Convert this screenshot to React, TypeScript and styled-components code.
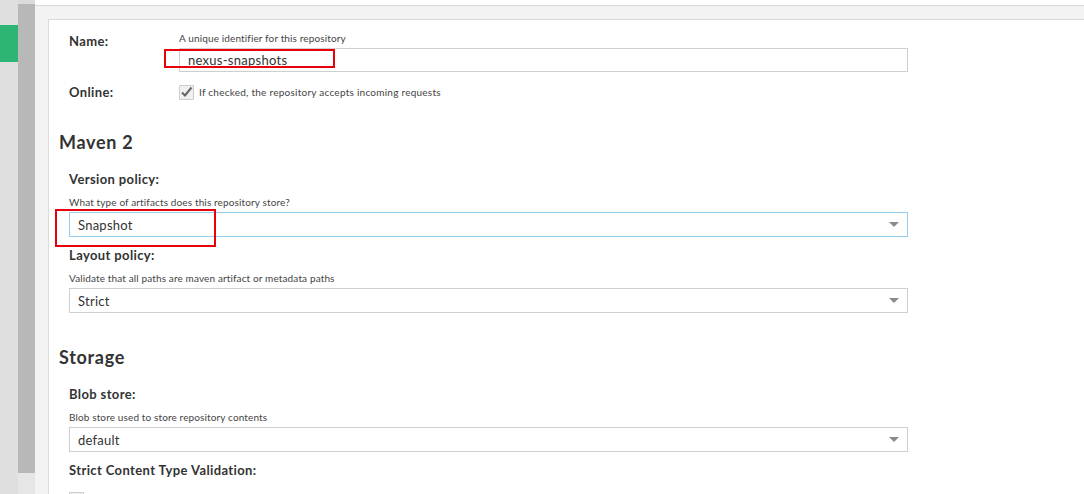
import styled, { createGlobalStyle } from 'styled-components';

const GlobalStyle = createGlobalStyle`
  html, body {
    margin: 0;
    padding: 0;
    background: #ffffff;
    font-family: Lato, 'Noto Sans', sans-serif;
    color: #333333;
  }
  * {
    box-sizing: border-box;
  }
`;

const Page = styled.div`
  display: flex;
  width: 1084px;
  height: 494px;
  overflow: hidden;
`;

const Sidebar = styled.div`
  width: 18px;
  flex-shrink: 0;
  background: #dfdfdf;
  padding-top: 25px;
`;

const GreenTab = styled.div`
  height: 37px;
  background: #2cb573;
`;

const Rail = styled.div`
  width: 17px;
  flex-shrink: 0;
  display: flex;
  flex-direction: column;
  background: #e6e6e6;
  border-top: 4px solid #dcdcdc;
`;

const RailThumb = styled.div`
  height: 469px;
  background: #b8b8b8;
`;

const Main = styled.div`
  flex: 1;
  display: flex;
  flex-direction: column;
  padding-top: 5px;
  background: #ffffff;
`;

const Body = styled.div`
  flex: 1;
  display: flex;
  background: #f3f3f3;
  border-top: 1px solid #d8d8d8;
  padding: 13px 0 0 13px;
`;

const Card = styled.div`
  flex: 1;
  background: #ffffff;
  border-top: 1px solid #dadada;
  border-left: 1px solid #dadada;
  padding: 12px 0 0 20px;
`;

const InlineRow = styled.div<{ $gap?: number }>`
  display: grid;
  grid-template-columns: 110px 729px;
  margin-top: ${(p) => p.$gap ?? 0}px;
`;

const Label = styled.div<{ $offset?: number }>`
  font-size: 13px;
  font-weight: 700;
  line-height: 16px;
  letter-spacing: 0.38px;
  color: #333333;
  margin-top: ${(p) => p.$offset ?? 0}px;
`;

const Hint = styled.div`
  font-size: 10px;
  line-height: 12px;
  letter-spacing: 0.13px;
  color: #444444;
`;

const FieldCol = styled.div`
  display: flex;
  flex-direction: column;
  gap: 4px;
`;

const Annotated = styled.div`
  position: relative;
`;

const TextInput = styled.div`
  height: 24px;
  border: 1px solid #cfcfcf;
  padding: 0 8px;
  font-size: 13px;
  line-height: 22px;
  letter-spacing: 0.27px;
  color: #333333;
`;

const Marker = styled.div<{ $l: number; $t: number; $w: number; $h: number }>`
  position: absolute;
  left: ${(p) => p.$l}px;
  top: ${(p) => p.$t}px;
  width: ${(p) => p.$w}px;
  height: ${(p) => p.$h}px;
  border: 2px solid #e8000b;
  pointer-events: none;
`;

const CheckLine = styled.div<{ $top?: number }>`
  display: flex;
  align-items: center;
  gap: 5px;
  height: 16px;
  margin-top: ${(p) => p.$top ?? 0}px;
`;

const CheckBox = styled.span`
  width: 15px;
  height: 15px;
  border: 1px solid #cccccc;
  background: #f0f0f0;
  border-radius: 1px;
  display: inline-flex;
  align-items: center;
  justify-content: center;
`;

const CheckText = styled.span`
  font-size: 10px;
  letter-spacing: 0.25px;
  color: #444444;
`;

const SectionTitle = styled.h2<{ $top: number }>`
  margin: ${(p) => p.$top}px 0 18px -10px;
  font-size: 18px;
  line-height: 22px;
  letter-spacing: 0.7px;
  font-weight: 700;
  color: #333333;
`;

const Field = styled.div`
  display: flex;
  flex-direction: column;
  width: 839px;
  margin-bottom: 10px;
`;

const FieldHint = styled(Hint)`
  margin: 9px 0 4px;
`;

const Select = styled.div<{ $focused?: boolean }>`
  height: 25px;
  display: flex;
  align-items: center;
  justify-content: space-between;
  padding: 0 8px;
  border: 1px solid ${(p) => (p.$focused ? '#96ccee' : '#cfcfcf')};
  font-size: 13px;
  letter-spacing: 0.25px;
  color: #333333;
`;

const Caret = styled.span`
  width: 0;
  height: 0;
  border-left: 5px solid transparent;
  border-right: 5px solid transparent;
  border-top: 5px solid #8a8a8a;
`;

const Check = () => (
  <CheckBox>
    <svg width="13" height="12" viewBox="0 0 13 12">
      <path d="M2 6.5 L5 9.5 L11.5 1.5" fill="none" stroke="#666666" strokeWidth="2" />
    </svg>
  </CheckBox>
);

type SelectFieldProps = {
  label: string;
  hint: string;
  value: string;
  focused?: boolean;
  marker?: boolean;
};

const SelectField = ({ label, hint, value, focused, marker }: SelectFieldProps) => (
  <Field>
    <Label>{label}</Label>
    <FieldHint>{hint}</FieldHint>
    <Annotated>
      <Select $focused={focused}>
        <span>{value}</span>
        <Caret />
      </Select>
      {marker && <Marker $l={-14} $t={-3} $w={161} $h={38} />}
    </Annotated>
  </Field>
);

const App = () => {
  return (
    <>
      <GlobalStyle />
      <Page>
        <Sidebar>
          <GreenTab />
        </Sidebar>
        <Rail>
          <RailThumb />
        </Rail>
        <Main>
          <Body>
            <Card>
              <InlineRow>
                <Label $offset={1}>Name:</Label>
                <FieldCol>
                  <Hint>A unique identifier for this repository</Hint>
                  <Annotated>
                    <TextInput>nexus-snapshots</TextInput>
                    <Marker $l={-15} $t={1} $w={171} $h={19} />
                  </Annotated>
                </FieldCol>
              </InlineRow>
              <InlineRow $gap={12}>
                <Label>Online:</Label>
                <CheckLine>
                  <Check />
                  <CheckText>If checked, the repository accepts incoming requests</CheckText>
                </CheckLine>
              </InlineRow>

              <SectionTitle $top={31}>Maven 2</SectionTitle>
              <SelectField
                label="Version policy:"
                hint="What type of artifacts does this repository store?"
                value="Snapshot"
                focused
                marker
              />
              <SelectField
                label="Layout policy:"
                hint="Validate that all paths are maven artifact or metadata paths"
                value="Strict"
              />

              <SectionTitle $top={33}>Storage</SectionTitle>
              <SelectField
                label="Blob store:"
                hint="Blob store used to store repository contents"
                value="default"
              />
              <Label>Strict Content Type Validation:</Label>
              <CheckLine $top={13}>
                <Check />
              </CheckLine>
            </Card>
          </Body>
        </Main>
      </Page>
    </>
  );
};

export default App;
